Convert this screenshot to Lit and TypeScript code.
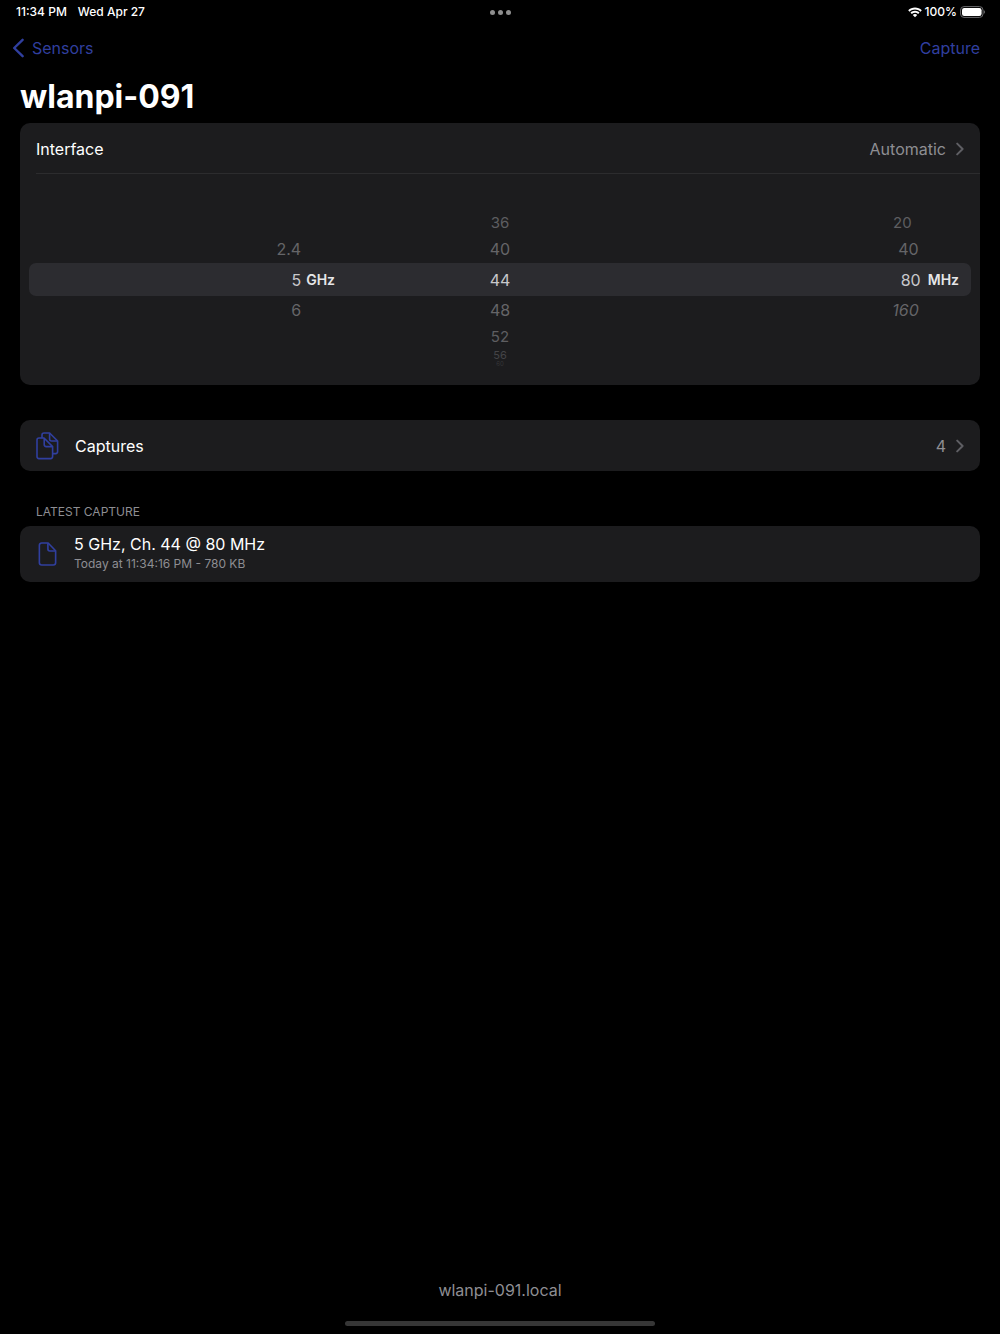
import { LitElement, html, css, svg, nothing } from "lit";
import { customElement, state } from "lit/decorators.js";

interface Wheel {
  name: string;
  label: string;
  unit: string;
  options: string[];
}

const WHEELS: Wheel[] = [
  { name: "band", label: "Band", unit: "GHz", options: ["2.4", "5", "6"] },
  { name: "channel", label: "Channel", unit: "", options: ["36", "40", "44", "48", "52", "56", "60"] },
  { name: "width", label: "Channel width", unit: "MHz", options: ["20", "40", "80", "160"] },
];

const REACH = 4;

const chevron = html`<svg class="chevron" viewBox="0 0 8 14" aria-hidden="true">
  <path d="M1.2 1.6 6.6 7 1.2 12.4" />
</svg>`;

const docShape = svg`<path d="M3.2 1H9.6L17 8.6V20.4A2.2 2.2 0 0 1 14.8 22.6H3.2A2.2 2.2 0 0 1 1 20.4V3.2A2.2 2.2 0 0 1 3.2 1Z" /><path d="M9.4 1.2V7A1.8 1.8 0 0 0 11.2 8.8H16.8" />`;

@customElement("app-root")
export class AppRoot extends LitElement {
  @state() private chosen: Record<string, number> = { band: 1, channel: 2, width: 2 };

  static styles = css`
    :host {
      display: flex;
      flex-direction: column;
      min-height: 100vh;
      box-sizing: border-box;
      background: #000;
      color: #fff;
      font: 16px/20px Inter, "Liberation Sans", sans-serif;
    }
    * { box-sizing: border-box; }
    svg { display: block; fill: none; flex: none; }
    h1, h2, p, fieldset { margin: 0; padding: 0; border: 0; min-width: 0; }
    a { color: inherit; text-decoration: none; }
    button { font: inherit; color: inherit; background: none; border: 0; padding: 0; cursor: pointer; }

    .status {
      display: grid;
      grid-template-columns: 1fr auto 1fr;
      align-items: center;
      height: 24px;
      padding: 0 15px 0 16px;
      font-size: 12px;
      line-height: 16px;
      font-weight: 500;
    }
    .clock { display: flex; gap: 11px; }
    .dots { display: flex; gap: 3px; }
    .dot { width: 5px; height: 5px; border-radius: 50%; background: #8e8e8e; }
    .power { display: flex; justify-content: flex-end; align-items: center; gap: 3px; }
    .wifi { width: 14px; height: 11px; fill: #fff; }
    .battery { width: 25px; height: 12px; }

    .nav {
      display: flex;
      justify-content: space-between;
      align-items: center;
      height: 48px;
      padding: 0 20px 0 12px;
      color: #303f9f;
    }
    .back { display: flex; align-items: center; gap: 8px; }
    .arrow { width: 12px; height: 20px; stroke: #303f9f; stroke-width: 2.4; stroke-linecap: round; stroke-linejoin: round; }

    .title { padding: 5px 20px 6px; font-size: 32px; line-height: 40px; font-weight: 700; }

    main { flex: 1; padding: 0 20px; }
    .card { border-radius: 10px; background: #1c1c1e; overflow: hidden; }
    .row { display: flex; align-items: center; height: 51px; padding: 0 16px; }
    .value { margin-left: auto; margin-right: 10px; color: #8e8e93; }
    .chevron { width: 8px; height: 14px; stroke: #5e5e63; stroke-width: 2; stroke-linecap: round; stroke-linejoin: round; }
    .line { height: 1px; margin: -1px 0 0 16px; background: #2c2c2e; }

    .picker {
      display: grid;
      grid-template-columns: repeat(3, 1fr);
      padding: 18px 9px;
      position: relative;
      isolation: isolate;
    }
    .picker::before {
      content: "";
      position: absolute;
      z-index: -1;
      inset: 89px 9px;
      border-radius: 7px;
      background: #2c2c30;
    }
    .wheel { display: flex; align-items: center; }
    .drum {
      flex: 1;
      display: grid;
      grid-template-rows: 6px 12px 25px 28px 33px 28px 25px 12px 6px;
      justify-items: center;
    }
    .band .drum, .width .drum { justify-items: end; }
    .band { padding-right: 8px; gap: 5px; }
    .width { padding-right: 12px; gap: 7px; }
    .unit { font-size: 14px; font-weight: 600; color: #e6e6e8; }
    .option { display: flex; align-items: center; cursor: pointer; }
    .option input { appearance: none; width: 0; height: 0; margin: 0; outline: none; }
    .d0 { color: #c8c8cb; }
    .d1 { color: #656568; }
    .d2 { color: #5e5e61; font-size: 15px; }
    .d3 { color: #444447; font-size: 11px; line-height: 12px; }
    .d4 { color: #37373a; font-size: 6px; line-height: 6px; }
    .width .d1 { padding-right: 2px; }
    .width .d2 { padding-right: 9px; }
    .width .below { font-style: italic; }

    .captures { margin-top: 35px; }
    .pair { width: 23px; height: 28px; margin-right: 16px; stroke: #303f9f; stroke-width: 1.6; stroke-linejoin: round; }
    .caption { padding: 31px 16px 4px; font-size: 12px; line-height: 20px; font-weight: 400; color: #8e8e93; }
    .latest { display: flex; align-items: center; gap: 17px; padding: 8px 18px; }
    .single { width: 19px; height: 24px; stroke: #303f9f; stroke-width: 1.6; stroke-linejoin: round; }
    .detail { font-size: 12px; color: #8e8e93; }

    footer { display: flex; flex-direction: column; align-items: center; gap: 21px; padding-bottom: 8px; color: #8e8e93; }
    .home { width: 31%; height: 5px; border-radius: 3px; background: #363636; }
  `;

  private pick(name: string, index: number) {
    this.chosen = { ...this.chosen, [name]: index };
  }

  private renderWheel(wheel: Wheel) {
    const current = this.chosen[wheel.name];
    return html`<fieldset class="wheel ${wheel.name}" aria-label=${wheel.label}>
      <div class="drum">
        ${wheel.options.map((text, index) => {
          const offset = index - current;
          if (Math.abs(offset) > REACH) return nothing;
          return html`<label
            class="option d${Math.abs(offset)} ${offset > 0 ? "below" : ""}"
            style="grid-row: ${offset + REACH + 1}"
          ><input
              type="radio"
              name=${wheel.name}
              .checked=${offset === 0}
              @change=${() => this.pick(wheel.name, index)}
            />${text}</label>`;
        })}
      </div>
      ${wheel.unit ? html`<span class="unit">${wheel.unit}</span>` : nothing}
    </fieldset>`;
  }

  render() {
    return html`
      <div class="status">
        <div class="clock"><span>11:34 PM</span><span>Wed Apr 27</span></div>
        <div class="dots"><i class="dot"></i><i class="dot"></i><i class="dot"></i></div>
        <div class="power">
          <svg class="wifi" viewBox="0 0 14 11" aria-hidden="true">
            <path d="M7 .6C4.400 .6 2 1.600 .2 3.300L1.500 4.700C3 3.300 4.900 2.500 7 2.500S11 3.300 12.500 4.700L13.800 3.300C12 1.600 9.600 .6 7 .6Z" />
            <path d="M7 3.800C5.300 3.800 3.700 4.500 2.500 5.600L3.800 7C4.700 6.200 5.800 5.700 7 5.700S9.300 6.200 10.200 7L11.500 5.600C10.300 4.500 8.700 3.800 7 3.800Z" />
            <path d="M7 7C6.100 7 5.400 7.300 4.800 7.900L7 10.300 9.200 7.900C8.600 7.300 7.900 7 7 7Z" />
          </svg>
          <span>100%</span>
          <svg class="battery" viewBox="0 0 25 12" aria-hidden="true">
            <rect x=".6" y=".6" width="22.400" height="10.800" rx="3.400" stroke="#6a6a6d" />
            <rect x="2" y="2" width="19.600" height="8" rx="2.200" fill="#fff" />
            <path d="M23.900 4.200C25.200 4.700 25.200 7.300 23.900 7.800Z" fill="#77777a" />
          </svg>
        </div>
      </div>

      <nav class="nav">
        <a class="back" href="#sensors">
          <svg class="arrow" viewBox="0 0 12 20" aria-hidden="true"><path d="M10.600 1.800 2.200 10 10.600 18.200" /></svg>
          <span>Sensors</span>
        </a>
        <button type="button">Capture</button>
      </nav>

      <h1 class="title">wlanpi-091</h1>

      <main>
        <section class="card">
          <a class="row" href="#interface">
            <span>Interface</span><span class="value">Automatic</span>${chevron}
          </a>
          <div class="line"></div>
          <div class="picker">${WHEELS.map((wheel) => this.renderWheel(wheel))}</div>
        </section>

        <section class="card captures">
          <a class="row" href="#captures">
            <svg class="pair" viewBox="0 0 23 28" aria-hidden="true">
              <path d="M6 6V3A2 2 0 0 1 8 1H13.600L21.600 9V19.600A2 2 0 0 1 19.600 21.600H16.600" />
              <path d="M13.600 1.200V7A2 2 0 0 0 15.600 9H21.400" />
              <path d="M3 6H8L16.600 14.600V24.600A2 2 0 0 1 14.600 26.600H3A2 2 0 0 1 1 24.600V8A2 2 0 0 1 3 6Z" />
              <path d="M8.200 6.200V12.600A2 2 0 0 0 10.200 14.600H16.400" />
            </svg>
            <span>Captures</span><span class="value">4</span>${chevron}
          </a>
        </section>

        <h2 class="caption">LATEST CAPTURE</h2>
        <section class="card">
          <a class="latest" href="#latest">
            <svg class="single" viewBox="0 0 18 23.600" aria-hidden="true">${docShape}</svg>
            <div>
              <p>5 GHz, Ch. 44 @ 80 MHz</p>
              <p class="detail">Today at 11:34:16 PM - 780 KB</p>
            </div>
          </a>
        </section>
      </main>

      <footer>
        <span>wlanpi-091.local</span>
        <div class="home"></div>
      </footer>
    `;
  }
}
